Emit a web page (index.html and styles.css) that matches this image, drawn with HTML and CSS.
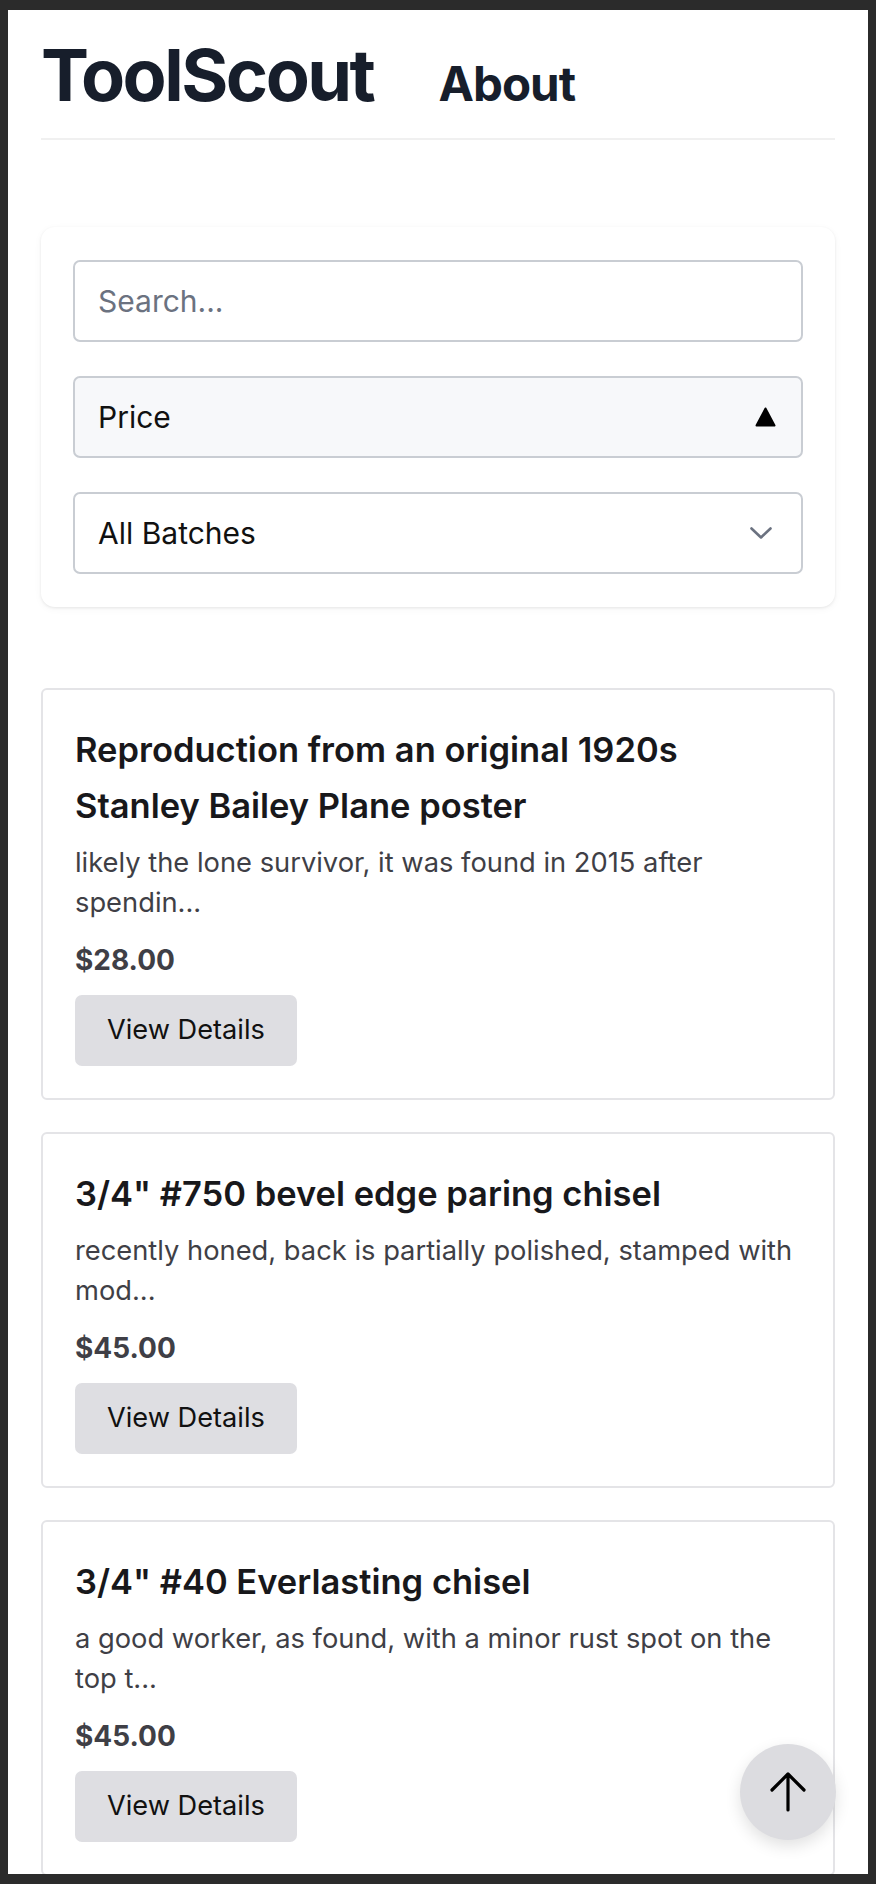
FILE: index.html
```html
<!DOCTYPE html>
<html lang="en">
<head>
<meta charset="utf-8">
<title>ToolScout</title>
<link rel="stylesheet" href="styles.css">
</head>
<body>
<div class="page">
  <header class="header">
    <div class="logo">ToolScout</div>
    <nav class="nav"><a class="nav-link" href="#">About</a></nav>
  </header>

  <section class="filters">
    <input class="field search" type="text" placeholder="Search...">
    <div class="field sort">
      <span>Price</span>
      <svg class="tri" width="21" height="20" viewBox="0 0 21 20"><path d="M10.5 1.5 L19.5 18.5 L1.5 18.5 Z" fill="#000" stroke="#000" stroke-width="2" stroke-linejoin="round"/></svg>
    </div>
    <div class="field select">
      <span>All Batches</span>
      <svg class="chev" width="24" height="18" viewBox="0 0 24 18"><path d="M2.5 4.5 L12 13.5 L21.5 4.5" fill="none" stroke="#6b7280" stroke-width="2.6" stroke-linecap="round" stroke-linejoin="round"/></svg>
    </div>
  </section>

  <section class="list">
    <article class="card">
      <h2 class="title">Reproduction from an original 1920s Stanley Bailey Plane poster</h2>
      <p class="desc">likely the lone survivor, it was found in 2015 after spendin...</p>
      <p class="price">$28.00</p>
      <button class="btn">View Details</button>
    </article>
    <article class="card">
      <h2 class="title">3/4" #750 bevel edge paring chisel</h2>
      <p class="desc">recently honed, back is partially polished, stamped with mod...</p>
      <p class="price">$45.00</p>
      <button class="btn">View Details</button>
    </article>
    <article class="card">
      <h2 class="title">3/4" #40 Everlasting chisel</h2>
      <p class="desc">a good worker, as found, with a minor rust spot on the top t...</p>
      <p class="price">$45.00</p>
      <button class="btn">View Details</button>
    </article>
  </section>

  <button class="to-top" aria-label="Back to top">
    <svg width="40" height="44" viewBox="0 0 40 44"><path d="M20 40 L20 4 M4 20 L20 4 L36 20" fill="none" stroke="#000" stroke-width="3.2" stroke-linecap="round" stroke-linejoin="round"/></svg>
  </button>
</div>
</body>
</html>
```
FILE: styles.css
```css
html {
  background: #2b2b2b;
  margin: 0;
  padding: 0;
}
body {
  margin: 10px 8px;
  background: #ffffff;
  height: 1864px;
  overflow: hidden;
  font-family: Inter, "Liberation Sans", Arial, sans-serif;
  color: #18181b;
}
.page {
  position: relative;
  height: 100%;
  padding: 0 33px;
  box-sizing: border-box;
}
.header {
  display: flex;
  align-items: baseline;
  gap: 65px;
  padding: 25px 0 23px 0;
  border-bottom: 2px solid #f0f0f0;
}
.logo {
  font-size: 72px;
  line-height: 80px;
  font-weight: 700;
  letter-spacing: -0.035em;
  color: #171e2b;
}
.nav-link {
  font-size: 47.5px;
  line-height: 56px;
  font-weight: 700;
  letter-spacing: -0.02em;
  color: #171e2b;
  text-decoration: none;
}
.filters {
  margin-top: 87px;
  background: #fff;
  border-radius: 14px;
  box-shadow: 0 1px 3px rgba(0, 0, 0, 0.08), 0 2px 8px rgba(0, 0, 0, 0.04);
  padding: 33px 32px;
  display: flex;
  flex-direction: column;
  gap: 34px;
}
.field {
  box-sizing: border-box;
  height: 82px;
  width: 100%;
  border: 2px solid #c9cdd3;
  border-radius: 7px;
  padding: 0 23px;
  font-family: Inter, "Liberation Sans", Arial, sans-serif;
  font-size: 30px;
  color: #111;
  background: #fff;
  display: flex;
  align-items: center;
  justify-content: space-between;
  outline: none;
}
.search::placeholder {
  color: #6b7280;
  opacity: 1;
}
.sort {
  background: #f7f8fa;
  padding-right: 25px;
}
.select {
  padding-right: 28px;
}
.list {
  margin-top: 81px;
  display: flex;
  flex-direction: column;
  gap: 32px;
}
.card {
  border: 2px solid #e4e4e7;
  border-radius: 6px;
  padding: 32px;
}
.title {
  margin: 0;
  font-size: 34.5px;
  line-height: 56px;
  font-weight: 600;
  color: #18181b;
}
.desc {
  margin: 9px 0 0;
  font-size: 27.3px;
  line-height: 40px;
  color: #3f3f46;
}
.price {
  margin: 17px 0 0;
  font-size: 28px;
  line-height: 40px;
  font-weight: 700;
  color: #3f3f46;
}
.btn {
  margin-top: 15px;
  display: block;
  border: none;
  border-radius: 7px;
  background: #dedee2;
  color: #111;
  font-family: Inter, "Liberation Sans", Arial, sans-serif;
  font-size: 27.2px;
  line-height: 40px;
  padding: 15px 32px 16px;
}
.to-top {
  position: absolute;
  right: 32px;
  bottom: 34px;
  width: 96px;
  height: 96px;
  border-radius: 50%;
  border: none;
  background: #dcdce0;
  box-shadow: 0 6px 16px rgba(0, 0, 0, 0.12);
  display: flex;
  align-items: center;
  justify-content: center;
  padding: 0;
}
```
